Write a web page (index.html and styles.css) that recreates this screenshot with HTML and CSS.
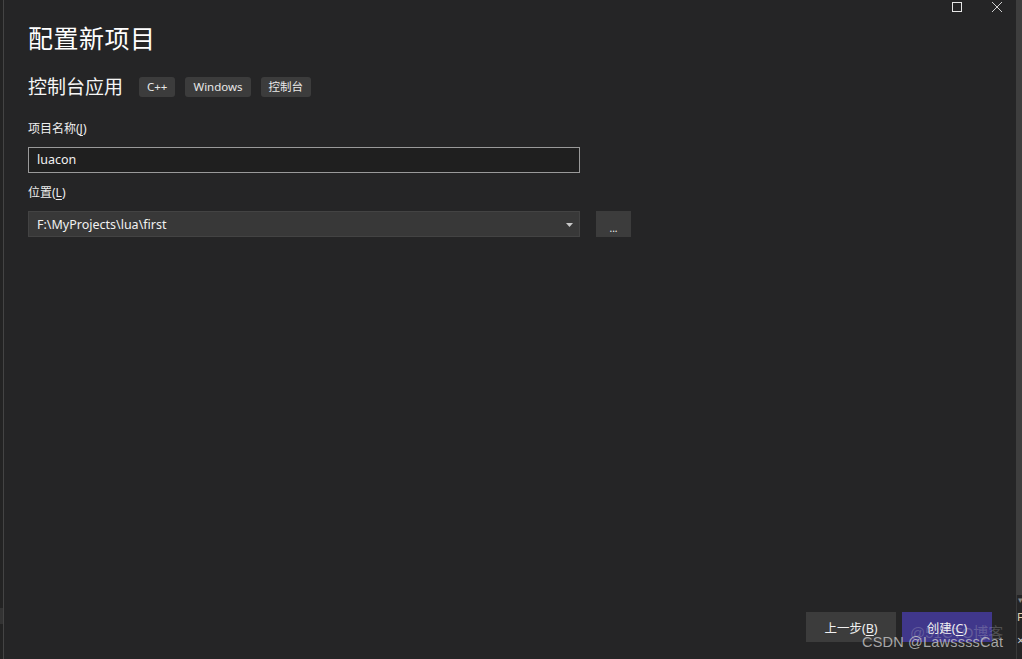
FILE: index.html
```html
<!DOCTYPE html>
<html lang="zh-CN">
<head>
<meta charset="utf-8">
<title>配置新项目</title>
<link rel="stylesheet" href="styles.css">
</head>
<body>
<div class="frame">
  <div class="edge-left"><div class="edge-left-block"></div></div>
  <main class="main">
    <h1 class="title">配置新项目</h1>
    <div class="subrow">
      <h2 class="subtitle">控制台应用</h2>
      <div class="tags">
        <span class="tag">C++</span>
        <span class="tag">Windows</span>
        <span class="tag">控制台</span>
      </div>
    </div>
    <label class="label">项目名称(<u>J</u>)</label>
    <div class="input">luacon</div>
    <label class="label label-loc">位置(<u>L</u>)</label>
    <div class="locrow">
      <div class="select">
        <span>F:\MyProjects\lua\first</span>
        <svg class="arrow" width="7" height="4" viewBox="0 0 7 4"><path d="M0 0H7L3.5 4Z" fill="#c8c8c8"/></svg>
      </div>
      <button class="browse">...</button>
    </div>
    <div class="spacer"></div>
    <div class="footer">
      <button class="btn">上一步(<u>B</u>)</button>
      <button class="btn btn-primary">创建(<u>C</u>)</button>
    </div>
  </main>
  <div class="edge-right">
    <div class="edge-right-top"></div>
    <div class="edge-right-bottom">
      <span class="er-arrow">▾</span>
      <span class="er-f">F</span>
      <span class="er-x">×</span>
    </div>
  </div>
</div>
<div class="winctl">
  <svg width="12" height="12" viewBox="0 0 12 12"><rect x="1.5" y="1.5" width="9" height="9" fill="none" stroke="#e6e6e6" stroke-width="1"/></svg>
  <svg width="12" height="12" viewBox="0 0 12 12"><path d="M1 1L11 11M11 1L1 11" stroke="#d0d0d0" stroke-width="1"/></svg>
</div>
<div class="watermark"><span class="wm-back">@51CTO博客</span><span class="wm-front">CSDN @LawssssCat</span></div>
</body>
</html>
```

FILE: styles.css
```css
* { box-sizing: border-box; }
html, body { margin: 0; padding: 0; }
body {
  width: 1022px;
  height: 659px;
  overflow: hidden;
  background: #252526;
  font-family: "Noto Sans", "Noto Sans CJK SC", sans-serif;
  color: #f1f1f1;
  position: relative;
}
.frame {
  display: flex;
  height: 659px;
}
.edge-left {
  width: 4px;
  background: #232323;
  border-right: 1px solid #444444;
  position: relative;
  flex: none;
}
.edge-left-block {
  position: absolute;
  left: 0;
  top: 608px;
  width: 3px;
  height: 16px;
  background: #333333;
}
.main {
  flex: 1;
  display: flex;
  flex-direction: column;
  padding: 0 0 17px 24px;
}
.title {
  margin: 21px 0 0 0;
  font-size: 25px;
  font-weight: 400;
  line-height: 34px;
  color: #ffffff;
  letter-spacing: 0.5px;
}
.subrow {
  display: flex;
  align-items: center;
  margin-top: 21px;
  height: 22px;
}
.subtitle {
  margin: 0;
  font-size: 19px;
  font-weight: 400;
  line-height: 22px;
  color: #f5f5f5;
}
.tags {
  display: flex;
  gap: 10px;
  margin-left: 16px;
}
.tag {
  background: #3c3c3c;
  border-radius: 3px;
  font-size: 11.5px;
  line-height: 20px;
  height: 20px;
  padding: 0 8px;
  color: #e8e8e8;
}
.label {
  display: block;
  font-size: 12px;
  line-height: 16px;
  margin-top: 23px;
  color: #eeeeee;
}
.label u, .btn u { text-decoration-thickness: 1px; text-underline-offset: 2px; }
.input {
  margin-top: 10px;
  width: 552px;
  height: 26px;
  border: 1px solid #9a9a9a;
  background: #1f1f1f;
  font-size: 12.5px;
  line-height: 24px;
  padding-left: 8px;
  color: #f1f1f1;
}
.label-loc { margin-top: 12px; }
.locrow {
  display: flex;
  margin-top: 10px;
  gap: 16px;
}
.select {
  width: 552px;
  height: 26px;
  background: #383838;
  border: 1px solid #434343;
  display: flex;
  align-items: center;
  justify-content: space-between;
  padding: 0 6px 0 8px;
  font-size: 12.5px;
  color: #f1f1f1;
}
.arrow { margin-top: 1px; }
.browse {
  width: 35px;
  height: 26px;
  background: #3c3c3c;
  border: none;
  color: #f1f1f1;
  font-family: inherit;
  font-size: 10px;
  line-height: 26px;
  padding: 0;
  padding-top: 4px;
}
.spacer { flex: 1; }
.footer {
  display: flex;
  justify-content: flex-end;
  gap: 6px;
  padding-right: 24px;
}
.btn {
  width: 90px;
  height: 30px;
  border: none;
  background: #3c3c3c;
  color: #f1f1f1;
  font-family: inherit;
  font-size: 12.5px;
  padding: 0;
}
.btn-primary { background: #40378b; }
.edge-right {
  width: 6px;
  flex: none;
  display: flex;
  flex-direction: column;
}
.edge-right-top {
  height: 595px;
  background: #3e3e3e;
}
.edge-right-bottom {
  flex: 1;
  background: #252526;
  border-left: 1px solid #3a3a3a;
  position: relative;
  overflow: hidden;
  font-size: 11px;
  color: #cccccc;
}
.er-arrow { position: absolute; left: 1px; top: -2px; font-size: 9px; color: #888; }
.er-f { position: absolute; left: 0; top: 14px; color: #e0d0b0; }
.er-x { position: absolute; left: 0; top: 36px; font-size: 13px; }
.winctl {
  position: absolute;
  top: 1px;
  left: 951px;
  display: flex;
  gap: 28px;
}
.watermark {
  position: absolute;
  left: 862px;
  top: 633px;
  font-size: 14.5px;
  line-height: 18px;
  font-family: "Liberation Sans", "Noto Sans CJK SC", sans-serif;
}
.wm-front {
  position: relative;
  color: rgba(210, 210, 210, 0.75);
  letter-spacing: 0.2px;
}
.wm-back {
  position: absolute;
  left: 48px;
  top: -9px;
  color: rgba(210, 210, 210, 0.25);
  font-size: 15px;
  white-space: nowrap;
}
```
